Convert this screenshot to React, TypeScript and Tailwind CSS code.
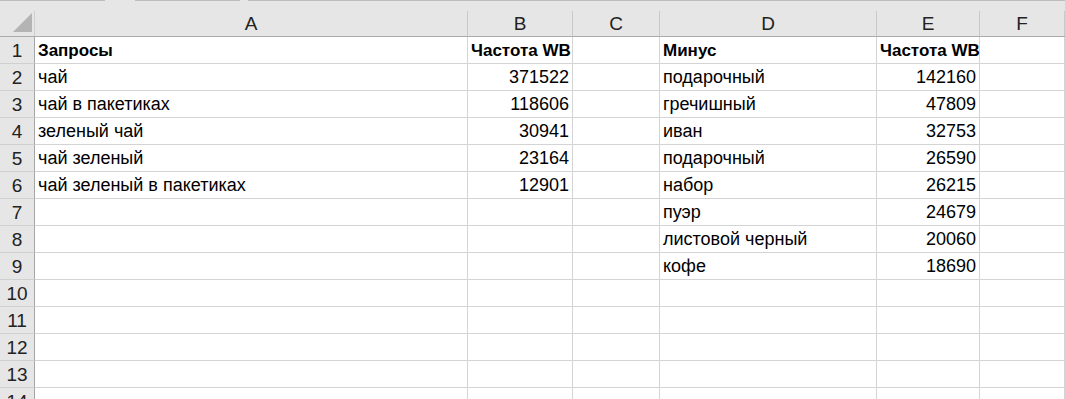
import React from "react";

const font = { fontFamily: '"Liberation Sans", Arial, sans-serif' };

type Row = { a?: string; b?: string; d?: string; e?: string; bold?: boolean };

const rows: Row[] = [
  { a: "Запросы", b: "Частота WB", d: "Минус", e: "Частота WB", bold: true },
  { a: "чай", b: "371522", d: "подарочный", e: "142160" },
  { a: "чай в пакетиках", b: "118606", d: "гречишный", e: "47809" },
  { a: "зеленый чай", b: "30941", d: "иван", e: "32753" },
  { a: "чай зеленый", b: "23164", d: "подарочный", e: "26590" },
  { a: "чай зеленый в пакетиках", b: "12901", d: "набор", e: "26215" },
  { d: "пуэр", e: "24679" },
  { d: "листовой черный", e: "20060" },
  { d: "кофе", e: "18690" },
  {}, {}, {}, {}, {},
];

const gridCols = "grid grid-cols-[35px_433px_105px_87px_217px_103px_1fr]";

function Cell({ children, right, bold }: { children?: React.ReactNode; right?: boolean; bold?: boolean }) {
  return (
    <div
      className={`h-[27px] border-r border-b border-[#d4d4d4] px-[3px] leading-[27px] whitespace-nowrap text-black ${right ? "text-right" : "text-left"} ${bold ? "font-bold text-[17px]" : "text-[18px]"}`}
    >
      {children}
    </div>
  );
}

export default function App() {
  return (
    <div className="w-[1065px] h-[399px] overflow-hidden bg-white" style={font}>
      {/* header */}
      <div className="h-[37px] bg-[#e6e6e6] border-b border-[#ababab] flex flex-col">
        <div className="flex h-px">
          <div className="w-[105px] bg-[#bdbdbd]" />
          <div className="w-[30px]" />
          <div className="w-[105px] bg-[#bdbdbd]" />
          <div className="w-[8px]" />
          <div className="flex-1 bg-[#bdbdbd]" />
        </div>
        <div className="h-[10px]" />
        <div className={`${gridCols} h-[25px]`}>
          <div className="relative border-r border-[#d0d0d0]">
            <svg className="absolute left-[13px] top-[2px]" width="20" height="20" viewBox="0 0 20 20">
              <polygon points="19,0 19,19 0,19" fill="#b4b4b4" />
            </svg>
          </div>
          {["A", "B", "C", "D", "E", "F"].map((l) => (
            <div key={l} className="border-r border-[#c8c8c8] text-center text-[19px] leading-[25px] text-[#222]">
              {l}
            </div>
          ))}
        </div>
      </div>
      {/* body */}
      {rows.map((r, i) => (
        <div key={i} className={gridCols}>
          <div className="h-[27px] bg-[#e6e6e6] border-r border-[#a6a6a6] border-b border-b-[#d0d0d0] text-center text-[19px] leading-[27px] text-[#222]">
            {i + 1}
          </div>
          <Cell bold={r.bold}>{r.a}</Cell>
          <Cell bold={r.bold} right={!r.bold}>{r.b}</Cell>
          <Cell />
          <Cell bold={r.bold}>{r.d}</Cell>
          <Cell bold={r.bold} right={!r.bold}>{r.e}</Cell>
          <Cell />
        </div>
      ))}
    </div>
  );
}
